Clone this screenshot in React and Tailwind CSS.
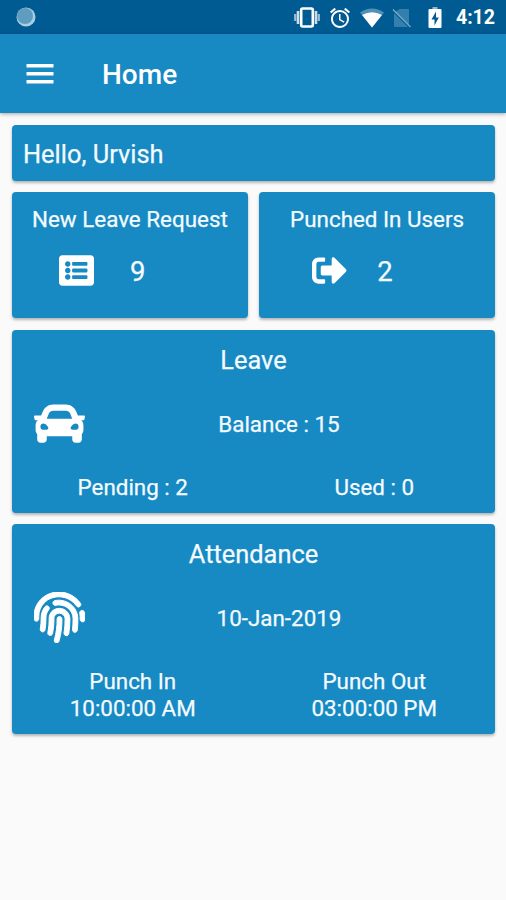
import clsx from "clsx";
import { FaCar, FaFingerprint, FaListAlt, FaSignOutAlt } from "react-icons/fa";
import { MdAlarm } from "react-icons/md";

const summary = [
  { title: "New Leave Request", value: 9, Icon: FaListAlt, row: "pl-[47px] gap-[36px]" },
  { title: "Punched In Users", value: 2, Icon: FaSignOutAlt, row: "pl-[53px] gap-[30px]" },
];

function Card({ className, children }) {
  return (
    <section className={clsx("rounded-[4px] bg-[#1789c3] shadow-[0_2px_3px_rgba(0,0,0,0.28)]", className)}>
      {children}
    </section>
  );
}

function StatusBar() {
  return (
    <div className="flex h-[34px] items-center justify-between bg-[#005b92] pr-[11px] pl-4">
      <svg width="20" height="20" viewBox="0 0 20 20">
        <circle cx="10" cy="10" r="9.5" fill="#a9cee2" />
        <circle cx="9" cy="9" r="8" fill="#5f9dc0" />
      </svg>
      <div className="flex items-center pt-px">
        {/* vibrate */}
        <svg width="26" height="21" viewBox="0 0 26 21" fill="none" stroke="#fff">
          <rect x="7.2" y="1.5" width="11.6" height="18" rx="1.5" strokeWidth="2.6" />
          <path d="M4 4V17M22 4V17" strokeWidth="2.6" opacity=".8" />
          <path d="M1.2 7V14M24.8 7V14" strokeWidth="2.2" opacity=".6" />
        </svg>
        <MdAlarm size={24} className="ml-[8px]" />
        <svg className="ml-[8px]" width="24" height="20" viewBox="0 0 24 20">
          <path d="M0 4.5Q12-3.5 24 4.5L12 19.5Z" fill="#4f91b8" />
          <path d="M2 7Q12 1.5 22 7L12 19.5Z" fill="#fff" />
        </svg>
        {/* no sim */}
        <svg className="ml-[8px]" width="20" height="20" viewBox="0 0 20 20">
          <path d="M7.5 1H16Q17 1 17 2V17L3 4.500ZM2 5L16 19H3Q2 19 2 18Z" fill="#347fad" />
          <path d="M1 1.5L18.5 19" stroke="#75a9c7" strokeWidth="1.5" />
        </svg>
        <svg className="ml-[16px]" width="14" height="21" viewBox="0 0 14 21">
          <path d="M4.5 0H9.5V2.5H4.5Z" fill="#8db9d3" />
          <rect x=".5" y="2" width="13" height="19" rx="1" fill="#fff" />
          <path d="M8 4.5L3.5 12.5H6.5V18.5L10.8 10.5H8Z" fill="#005b92" />
        </svg>
        <span className="ml-[14px] text-[19.5px] leading-none font-bold">4:12</span>
      </div>
    </div>
  );
}

function AppBar() {
  return (
    <div className="flex h-[79px] items-center bg-[#1789c3] pl-[26px] shadow-[0_1px_4px_rgba(0,0,0,0.35)]">
      <svg width="28" height="20" viewBox="0 0 28 20" fill="currentColor">
        <path d="M.5 0H27.5V3.5H.5ZM.5 8H27.5V11.5H.5ZM.5 16H27.5V19.5H.5Z" />
      </svg>
      <h1 className="mt-[3px] ml-[48px] text-[28px] leading-8 font-medium">Home</h1>
    </div>
  );
}

export default function App() {
  return (
    <div className="min-h-[900px] w-full bg-[#fafafa] font-['Roboto',sans-serif] text-[22.4px] leading-[27px] text-[#f4fbff]">
      <header className="text-white">
        <StatusBar />
        <AppBar />
      </header>
      <main className="flex flex-col pt-3 pr-[11px] pl-3 [-webkit-text-stroke:0.25px]">
        <Card className="flex h-[56px] items-center px-[11px] pt-[3px] text-[25.4px]">Hello, Urvish</Card>
        <div className="mt-[11px] grid grid-cols-2 gap-[11.5px]">
          {summary.map(({ title, value, Icon, row }) => (
            <Card key={title} className="h-[126px] pt-[14px]">
              <h2 className="text-center">{title}</h2>
              <div className={clsx("mt-[20px] flex items-center leading-[34px]", row)}>
                <Icon size={35} className="-mt-px text-white" />
                <span className="mt-[2px] text-[27.5px]">{value}</span>
              </div>
            </Card>
          ))}
        </div>
        <Card className="mt-[12px] h-[182.5px] pt-[15px]">
          <h2 className="text-center text-[25.4px] leading-[30px]">Leave</h2>
          <div className="mt-[23px] grid grid-cols-[51px_1fr] items-center px-[22px]">
            <FaCar size={51} className="text-white" />
            <span className="mt-[2px] text-center">Balance : 15</span>
          </div>
          <div className="mt-[25px] grid grid-cols-2 text-center">
            <span>Pending : 2</span>
            <span>Used : 0</span>
          </div>
        </Card>
        <Card className="mt-[11.5px] h-[209.5px] pt-[15px]">
          <h2 className="text-center text-[25.4px] leading-[30px]">Attendance</h2>
          <div className="mt-[23px] grid grid-cols-[51px_1fr] items-center px-[22px]">
            <FaFingerprint size={51} className="text-white" stroke="currentColor" strokeWidth={10} />
            <span className="mt-[2px] text-center">10-Jan-2019</span>
          </div>
          <div className="mt-[25px] grid grid-cols-2 text-center">
            <p>Punch In<br />10:00:00 AM</p>
            <p>Punch Out<br />03:00:00 PM</p>
          </div>
        </Card>
      </main>
    </div>
  );
}
